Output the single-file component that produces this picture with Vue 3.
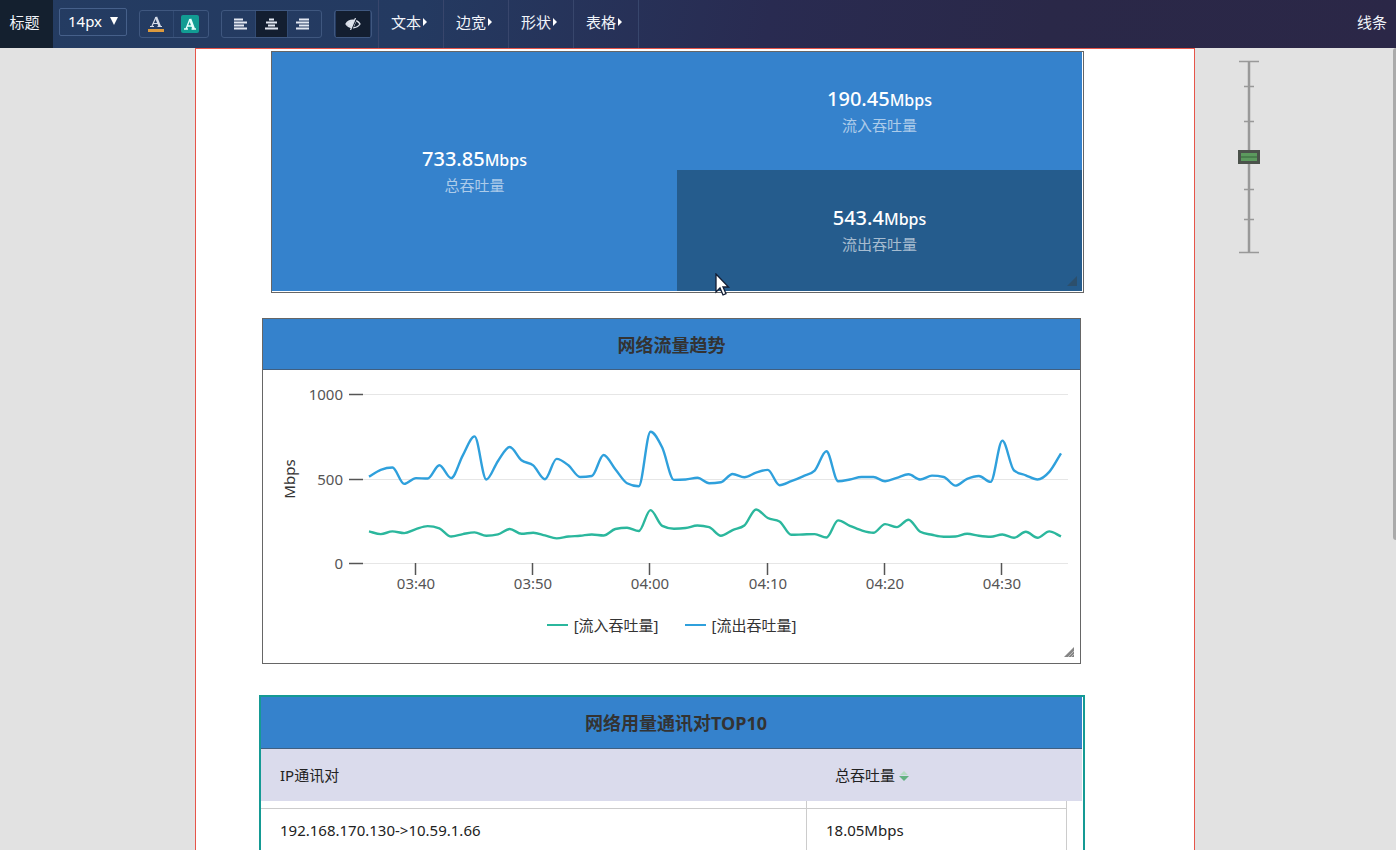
<script setup>
import { ref } from 'vue'

const fontSize = ref('14px')
const zoomLevel = ref(50)
const align = ref('center')
const menus = ['文本', '边宽', '形状', '表格']
const aligns = [
  { id: 'left', label: '左对齐', d: 'M0 1.5h9M0 4.5h13M0 7.5h10M0 10.5h13' },
  { id: 'center', label: '居中', d: 'M4 1.5h5M1 4.5h11M3 7.5h7M0 10.5h13' },
  { id: 'right', label: '右对齐', d: 'M3 1.5h10M0 4.5h13M3 7.5h10M0 10.5h13' },
]

const outflow = [
  511, 551, 565, 468, 502, 500, 578, 502, 637, 749, 494, 604, 686, 608, 578,
  496, 616, 578, 509, 515, 639, 555, 472, 454, 777, 683, 492, 494, 504, 472,
  478, 527, 507, 535, 551, 460, 484, 513, 547, 661, 484, 494, 509, 509, 484,
  504, 525, 494, 517, 509, 458, 498, 515, 480, 724, 547, 519, 494, 539, 649,
]
const inflow = [
  187, 171, 187, 177, 201, 218, 205, 157, 171, 181, 161, 169, 201, 173, 179,
  163, 146, 157, 161, 169, 163, 201, 209, 189, 313, 220, 203, 207, 222, 212,
  161, 195, 222, 317, 266, 246, 167, 169, 171, 151, 252, 220, 193, 179, 230,
  212, 256, 185, 167, 155, 157, 173, 161, 155, 169, 149, 185, 149, 187, 157,
]

const baseY = 193
const xAt = (i) => 106 + (i * 692) / 59
const yAt = (v) => baseY - (v * 169) / 1000
const yTicks = [1000, 500, 0]
const xTicks = ['03:40', '03:50', '04:00', '04:10', '04:20', '04:30'].map((label, i) => ({
  label,
  x: Math.round(xAt(4 + i * 10)),
}))

// Monotone cubic interpolation, so the curve never overshoots its samples.
function curve(values) {
  const p = values.map((v, i) => [xAt(i), yAt(v)])
  const h = p[1][0] - p[0][0]
  const slope = p.slice(1).map((q, i) => (q[1] - p[i][1]) / h)
  const m = p.map((_, i) => {
    if (i === 0) return slope[0]
    if (i === p.length - 1) return slope[i - 1]
    const a = slope[i - 1]
    const b = slope[i]
    if (a * b <= 0) return 0
    return Math.sign(a) * Math.min(Math.abs(a) * 2, Math.abs(b) * 2, Math.abs(a + b) / 2)
  })
  let d = `M${p[0][0]} ${p[0][1]}`
  for (let i = 1; i < p.length; i++) {
    const [x0, y0] = p[i - 1]
    const [x1, y1] = p[i]
    d += `C${x0 + h / 3} ${y0 + (m[i - 1] * h) / 3} ${x1 - h / 3} ${y1 - (m[i] * h) / 3} ${x1} ${y1}`
  }
  return d
}
</script>

<template>
  <div class="app">
    <header class="toolbar">
      <button class="tab">标题</button>
      <div class="size">
        <select v-model="fontSize" aria-label="字号">
          <option>12px</option>
          <option>14px</option>
          <option>16px</option>
        </select>
        <svg width="8" height="8" viewBox="0 0 8 8"><path d="M0 0h8L4 8z" fill="#fff" /></svg>
      </div>
      <div class="group colors">
        <button aria-label="文字颜色">
          <svg width="18" height="18" viewBox="0 0 18 18">
            <path d="M5 11 9 2M3 11.500h4M10.500 11.500h4.500M6.500 8.500h5" fill="none" stroke="#d5dbe8" stroke-width="1.200" />
            <path d="M9 2 12.800 11.500" stroke="#d5dbe8" stroke-width="2.400" />
            <path d="M1 14h16v3H1z" fill="#dc9a3e" />
          </svg>
        </button>
        <button aria-label="背景颜色">
          <svg width="18" height="18" viewBox="0 0 18 18">
            <rect width="18" height="18" rx="2" fill="#129c93" />
            <path d="M5 14 9 4M3 14h4M10.500 14h4.500M6.500 11h5" fill="none" stroke="#e8fffc" stroke-width="1.400" />
            <path d="M9 4 12.800 14" stroke="#e8fffc" stroke-width="2.600" />
          </svg>
        </button>
      </div>
      <div class="group aligns">
        <button
          v-for="a in aligns"
          :key="a.id"
          :class="{ on: align === a.id }"
          :aria-label="a.label"
          @click="align = a.id"
        >
          <svg width="13" height="12" viewBox="0 0 13 12"><path :d="a.d" stroke="#e3e8f2" stroke-width="1.800" /></svg>
        </button>
      </div>
      <div class="group eye">
        <button class="on" aria-label="隐藏">
          <svg width="16" height="12" viewBox="0 0 16 12">
            <path d="M1 6C4 1 12 1 15 6 12 11 4 11 1 6z" fill="none" stroke="#dfe4ee" stroke-width="1.400" />
            <path d="M2 6C4 3 6 2.500 9 2.500L6.500 9C4.500 9 3 8 2 6zM10.500 4 8.500 9" fill="#dfe4ee" stroke="#dfe4ee" />
            <path d="M11.500 0 6.500 12" stroke="#131e30" stroke-width="1.400" />
            <path d="M10.500 0 5.500 12" stroke="#dfe4ee" stroke-width="1.200" />
          </svg>
        </button>
      </div>
      <nav class="menus">
        <button v-for="m in menus" :key="m">
          {{ m }}<svg width="4" height="8" viewBox="0 0 4 8"><path d="M0 0 4 4 0 8z" fill="#fff" /></svg>
        </button>
      </nav>
      <button class="last">线条</button>
    </header>

    <div class="workspace">
      <main class="sheet">
        <section class="card stats">
          <div class="stat total">
            <div class="value">733.85<small>Mbps</small></div>
            <div class="label">总吞吐量</div>
          </div>
          <div class="stat">
            <div class="value">190.45<small>Mbps</small></div>
            <div class="label">流入吞吐量</div>
          </div>
          <div class="stat dark">
            <div class="value">543.4<small>Mbps</small></div>
            <div class="label">流出吞吐量</div>
          </div>
          <svg class="grip" width="10" height="10" viewBox="0 0 10 10"><path d="M10 0v10H0z" fill="#2c4f6c" /></svg>
          <svg class="pointer" width="16" height="24" viewBox="0 0 16 24">
            <path d="M1 1v18l4-4 3 7 3-1.300-3-6.700H13.500z" fill="#fff" stroke="#111c33" stroke-width="1.300" />
          </svg>
        </section>

        <section class="card trend">
          <h2>网络流量趋势</h2>
          <svg class="chart" viewBox="0 0 817 232" role="img" aria-label="网络流量趋势">
            <g v-for="t in yTicks" :key="t">
              <path :d="`M99 ${Math.round(yAt(t))}.5H805`" stroke="#e6e6e6" />
              <path :d="`M86 ${Math.round(yAt(t))}.5H100`" stroke="#555" stroke-width="1.500" />
              <text x="80" :y="Math.round(yAt(t)) + 6" text-anchor="end">{{ t }}</text>
            </g>
            <g v-for="t in xTicks" :key="t.label">
              <path :d="`M${t.x - 1}.5 193v12`" stroke="#555" stroke-width="1.500" />
              <text :x="t.x" y="219" text-anchor="middle">{{ t.label }}</text>
            </g>
            <text class="unit" x="0" y="0" transform="translate(32 109) rotate(-90)" text-anchor="middle">Mbps</text>
            <path :d="curve(inflow)" class="line" stroke="#2bb79d" />
            <path :d="curve(outflow)" class="line" stroke="#2fa0dc" />
          </svg>
          <div class="legend">
            <span class="key in">[流入吞吐量]</span>
            <span class="key out">[流出吞吐量]</span>
          </div>
          <svg class="grip" width="10" height="10" viewBox="0 0 10 10">
            <path d="M10 0v10H0z" fill="#858585" /><path d="M4 10l6-6M7 10l3-3" stroke="#bbb" />
          </svg>
        </section>

        <section class="card pairs">
          <h2>网络用量通讯对TOP10</h2>
          <table>
            <colgroup><col /><col class="c2" /><col class="c3" /></colgroup>
            <thead>
              <tr>
                <th scope="col">IP通讯对</th>
                <th scope="col" colspan="2">总吞吐量<svg width="10" height="10" viewBox="0 0 10 10"><path d="M5 0 9 4H1z" fill="#b5dcc3" /><path d="M0 5h10L5 10z" fill="#62b182" /></svg></th>
              </tr>
            </thead>
            <tbody>
              <tr class="lead"><td></td><td></td></tr>
              <tr><td>192.168.170.130-&gt;10.59.1.66</td><td>18.05Mbps</td></tr>
            </tbody>
          </table>
        </section>
      </main>

      <aside class="side">
        <div class="zoom">
          <svg width="22" height="194" viewBox="0 0 22 194">
            <path d="M11 1v192" stroke="#999" stroke-width="2.500" />
            <path d="M1 1.500h20M1 192.500h20M6 26.500h10M6 61.500h10M6 129.500h10M6 159.500h10" stroke="#999" stroke-width="1.500" />
          </svg>
          <input v-model="zoomLevel" type="range" min="0" max="100" aria-label="缩放" />
        </div>
        <div class="scroll"></div>
      </aside>
    </div>
  </div>
</template>

<style>
body {
  margin: 0;
  overflow: hidden;
}
</style>

<style scoped>
.app {
  height: 100vh;
  display: flex;
  flex-direction: column;
  overflow: hidden;
  background: #e2e2e2;
  color: #333;
  font-family: "Noto Sans", "Noto Sans CJK SC", sans-serif;
  font-size: 15px;
}
* {
  box-sizing: border-box;
}
button {
  margin: 0;
  padding: 0;
  border: 0;
  background: none;
  color: #f1f4fa;
  font: inherit;
  display: flex;
  align-items: center;
  justify-content: center;
}
.toolbar {
  flex: 0 0 48px;
  display: flex;
  align-items: center;
  padding-bottom: 4px;
  background: linear-gradient(100deg, #243c62 0%, #243a61 30%, #292b51 55%, #2a2848 75%, #2b2747 100%);
}
.tab {
  width: 53px;
  height: 48px;
  margin-bottom: -4px;
  padding: 0 4px 5px 0;
  background: #14202f;
}
.size {
  position: relative;
  margin-left: 6px;
}
.size select {
  appearance: none;
  display: block;
  width: 68px;
  height: 28px;
  padding: 0 8px 2px;
  border: 1px solid #46608a;
  border-radius: 2px;
  background: transparent;
  color: #fff;
  font: inherit;
}
.size svg {
  position: absolute;
  right: 9px;
  top: 9px;
  pointer-events: none;
}
.group {
  display: flex;
  height: 28px;
  margin: 3px 0 0 12px;
  border: 1px solid #3f577f;
  border-radius: 3px;
}
.group button {
  flex: 1;
}
.group button + button {
  border-left: 1px solid #314a72;
}
.group .on {
  background: #131e30;
}
.colors {
  width: 70px;
  padding-right: 2px;
}
.aligns {
  width: 101px;
  padding: 0 3px;
}
.eye {
  width: 38px;
  padding: 0 1px;
}
.menus {
  display: flex;
  height: 48px;
  margin: 0 0 -4px 6px;
  border-left: 1px solid #38466c;
}
.menus button {
  width: 65px;
  padding: 0 4px 5px 0;
  border-right: 1px solid #38466c;
}
.menus svg {
  margin-left: 2px;
}
.last {
  margin: 0 9px 0 auto;
  padding-bottom: 1px;
}
.workspace {
  flex: 1;
  min-height: 0;
  display: grid;
  grid-template-columns: minmax(0, 1fr) 201px;
  padding-left: 195px;
}
.sheet {
  overflow: hidden;
  padding: 2px 0 0 0;
  border: 1px solid #e6554a;
  border-bottom: 0;
  background: #fff;
}
.card {
  position: relative;
  border: 1px solid #666;
}
.stats {
  display: grid;
  grid-template: 118px 121px / 1fr 1fr;
  height: 242px;
  margin: 0 110px 0 75px;
  padding-right: 1px;
}
.stat {
  display: flex;
  flex-direction: column;
  align-items: center;
  justify-content: center;
  background: #3582cc;
  color: #fff;
}
.total {
  grid-row: 1 / 3;
}
.dark {
  background: #255c8d;
}
.value {
  font-size: 20px;
  line-height: 26px;
  font-weight: 500;
}
.value small {
  font-size: 16px;
}
.label {
  line-height: 24px;
  color: rgba(255, 255, 255, 0.6);
}
.grip {
  position: absolute;
  right: 6px;
  bottom: 6px;
}
.pointer {
  position: absolute;
  left: 443px;
  top: 221px;
}
h2 {
  margin: 0;
  height: 52px;
  border-bottom: 1px solid #405f80;
  background: #3582cc;
  font-size: 18px;
  line-height: 52px;
  text-align: center;
}
.trend {
  margin: 25px 113px 0 66px;
  padding-bottom: 26px;
}
.trend h2 {
  height: 51px;
}
.chart {
  display: block;
  width: 100%;
  height: auto;
  fill: #555;
  font-size: 15px;
}
.unit {
  fill: #333;
}
.line {
  fill: none;
  stroke-width: 2.4;
}
.legend {
  display: flex;
  justify-content: center;
  gap: 26px;
  line-height: 24px;
  padding-top: 11px;
}
.key {
  display: flex;
  align-items: center;
  gap: 6px;
}
.key::before {
  content: "";
  width: 21px;
  height: 2px;
}
.in::before {
  background: #2bb79d;
}
.out::before {
  background: #2fa0dc;
}
.pairs {
  margin: 31px 109px 0 63px;
  padding-right: 1px;
  border: 2px solid #159a94;
}
.pairs h2 {
  padding-left: 9px;
}
table {
  width: 100%;
  border-collapse: separate;
  border-spacing: 0;
  table-layout: fixed;
}
.c2 {
  width: 260px;
}
.c3 {
  width: 15px;
}
th {
  height: 52px;
  padding: 0 0 2px 28px;
  background: #dadbec;
  color: #222;
  font-weight: 400;
  text-align: left;
}
th:first-child {
  padding-left: 19px;
}
th svg {
  margin-left: 4px;
}
td {
  height: 43px;
  padding: 0 0 0 19px;
  border-right: 1px solid #ccc;
  border-bottom: 1px solid #ccc;
  color: #222;
}
.lead td {
  height: 8px;
}
.zoom {
  position: relative;
  width: 22px;
  margin: 12px 0 0 43px;
}
.zoom svg {
  display: block;
}
.zoom input {
  position: absolute;
  inset: 0;
  width: 22px;
  height: 194px;
  margin: 0;
  appearance: none;
  background: transparent;
  writing-mode: vertical-lr;
}
.zoom input::-webkit-slider-thumb {
  appearance: none;
  width: 22px;
  height: 14px;
  border: 3px solid #4b524b;
  background: linear-gradient(#5c9a5e 0 3px, #487f4c 3px 5px, #5c9a5e 5px);
}
.side {
  display: flex;
  justify-content: space-between;
  align-items: flex-start;
}
.scroll {
  width: 3px;
  height: 492px;
  border-radius: 3px 0 0 3px;
  background: #aaa;
}
</style>
